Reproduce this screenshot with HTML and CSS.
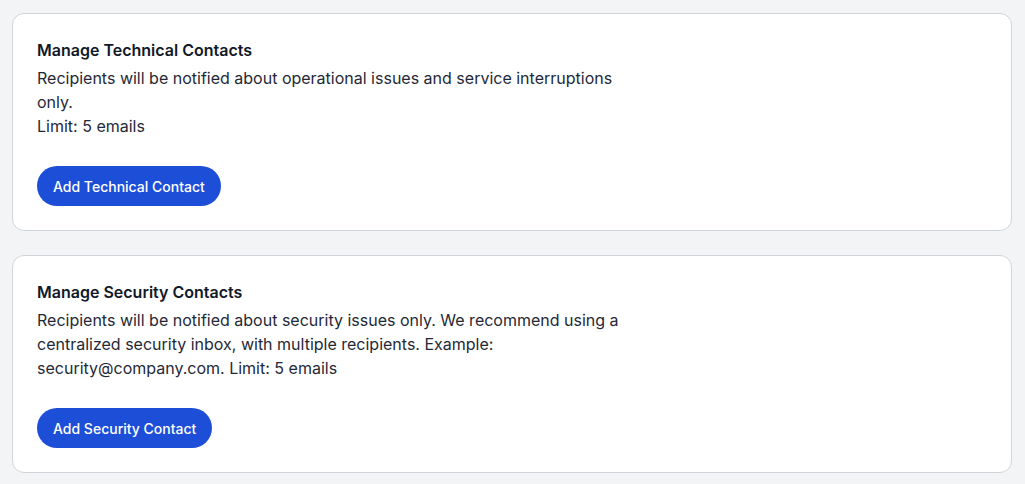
FILE: index.html
```html
<!DOCTYPE html>
<html lang="en">
<head>
    <meta charset="UTF-8">
    <meta name="viewport" content="width=device-width, initial-scale=1.0">
    <title>Contacts</title>
    <link rel="stylesheet" href="styles.css">
</head>
<body>
    <div class="container">
        <div class="card">
            <h2 class="card-title">Manage Technical Contacts</h2>
            <p class="card-text">Recipients will be notified about operational issues and service interruptions only.<br>Limit: 5 emails</p>
            <button class="btn">Add Technical Contact</button>
        </div>
        <div class="card">
            <h2 class="card-title">Manage Security Contacts</h2>
            <p class="card-text">Recipients will be notified about security issues only. We recommend using a centralized security inbox, with multiple recipients. Example: security@company.com. Limit: 5 emails</p>
            <button class="btn">Add Security Contact</button>
        </div>
    </div>
</body>
</html>
```

FILE: styles.css
```css
* {
    box-sizing: border-box;
    margin: 0;
    padding: 0;
    font-family: Inter, "Noto Sans", sans-serif;
}

body {
    background-color: #f3f4f6;
}

.container {
    display: flex;
    flex-direction: column;
    gap: 24px;
    padding: 13px 13px 13px 12px;
}

.card {
    background-color: #fff;
    border: 1px solid #d1d5db;
    border-radius: 12px;
    padding: 24px;
}

.card-title {
    font-size: 16px;
    font-weight: 600;
    line-height: 24px;
    color: #111827;
    margin-bottom: 4px;
}

.card-text {
    font-size: 16px;
    line-height: 24px;
    color: #1f2937;
    max-width: 600px;
}

.btn {
    display: block;
    height: 40px;
    margin-top: 28px;
    padding: 0 16px;
    border: none;
    border-radius: 20px;
    background-color: #1d4ed8;
    color: #fff;
    font-size: 14px;
    font-weight: 500;
    cursor: pointer;
}
```
